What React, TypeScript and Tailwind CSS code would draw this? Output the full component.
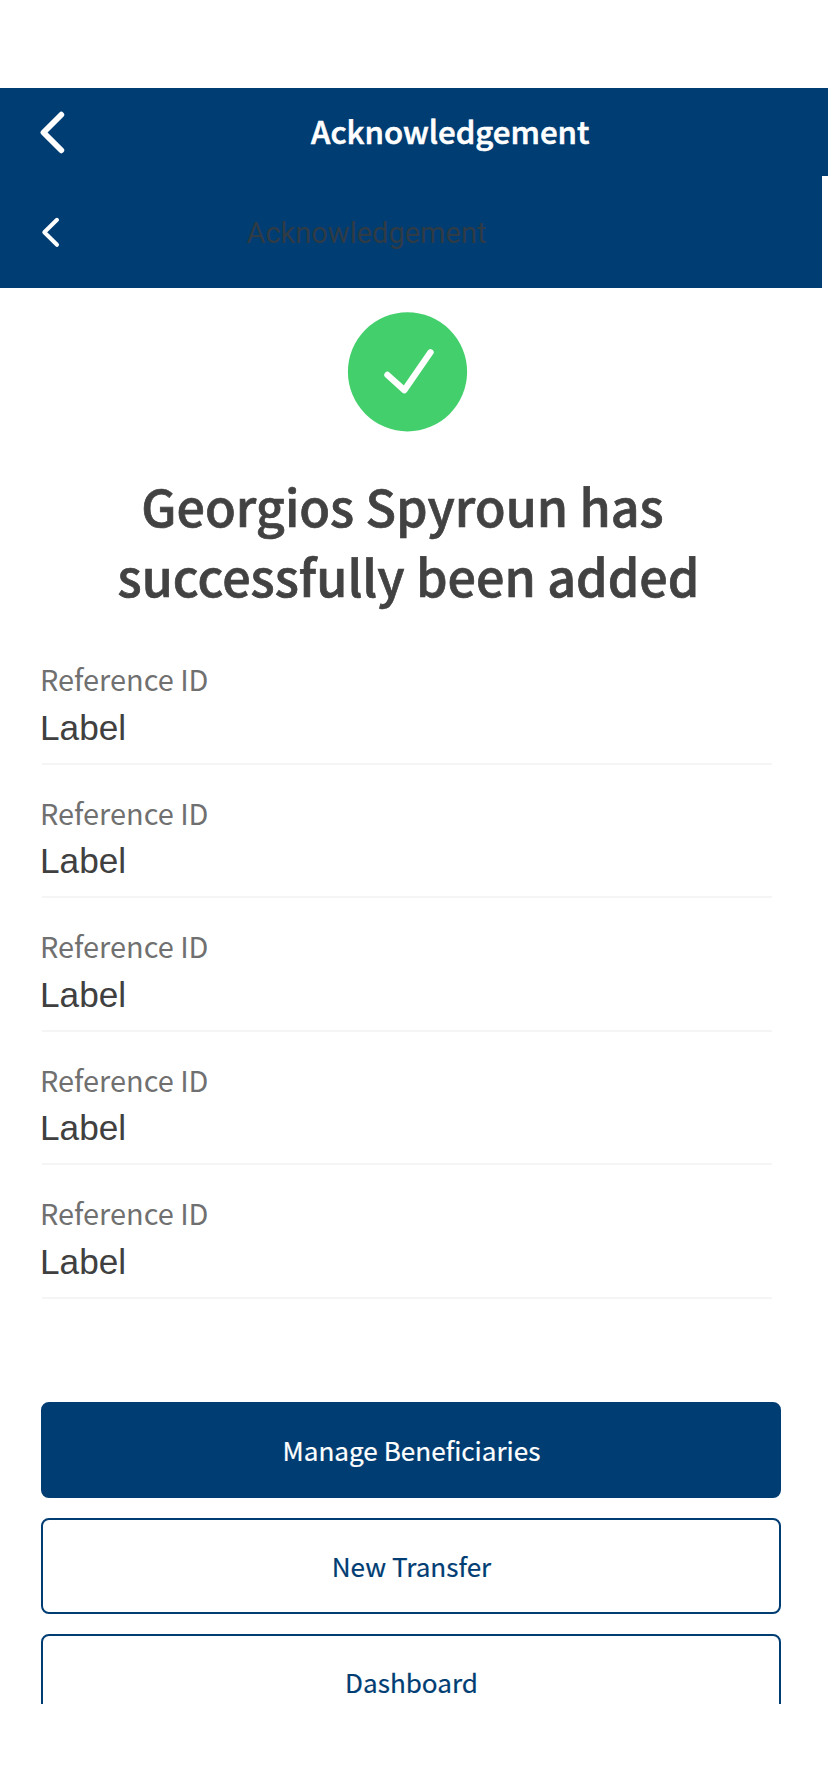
const SANS = "font-['Noto_Sans_CJK_SC','Noto_Sans',sans-serif]";

function Chevron({ className, points, stroke }: { className: string; points: string; stroke: number }) {
  return (
    <svg className={className} fill="none" stroke="#fff" strokeWidth={stroke} strokeLinecap="round" strokeLinejoin="round">
      <polyline points={points} />
    </svg>
  );
}

function DetailRow({ label, value }: { label: string; value: string }) {
  return (
    <div className="h-[133.5px] border-b-2 border-[#f5f5f5] pt-[28.7px]">
      <div className="-ml-[2px] text-[28.9px] leading-9 text-[#707070]">{label}</div>
      <div className="-ml-[2px] mt-[9.5px] font-['Liberation_Sans',Arial,sans-serif] text-[35.2px] leading-[44px] text-[#404040]">
        {value}
      </div>
    </div>
  );
}

function ActionButton({ label, primary = false }: { label: string; primary?: boolean }) {
  return (
    <button
      className={`h-24 w-full shrink-0 rounded-lg border-2 border-[#003d73] pl-px text-[26.1px] leading-9 [-webkit-text-stroke:0.2px] ${
        primary ? "bg-[#003d73] text-white" : "bg-white text-[#003d73]"
      }`}
    >
      {label}
    </button>
  );
}

const rows = [1, 2, 3, 4, 5];

export default function App() {
  return (
    <div className={`flex h-[1792px] w-[828px] flex-col bg-white pt-[88px] ${SANS}`}>
      <header className="flex h-[88px] shrink-0 items-center bg-[#003d73] pl-9">
        <Chevron className="h-12 w-8" points="25.3,6.7 7.5,24.5 25.3,42.3" stroke={5.8} />
        <h1 className="mb-[2px] ml-[243px] text-[31.2px] font-medium leading-[44px] text-white [-webkit-text-stroke:0.6px]">
          Acknowledgement
        </h1>
      </header>
      <div className="flex h-28 w-[822px] shrink-0 items-center bg-[#003d73] pl-9">
        <Chevron className="h-12 w-8" points="21,11.8 8.3,24.3 21,36.8" stroke={4} />
        <div className="ml-[178.5px] mt-[2px] font-[Roboto,sans-serif] text-[29px] leading-10 text-[#2f3b45]">
          Acknowledgement
        </div>
      </div>

      <main className="flex flex-col">
        <svg className="ml-[347px] mt-6 h-[120px] w-[121px]" viewBox="0 0 121 120" fill="none">
          <circle cx="60.5" cy="59.8" r="59.6" fill="#43cf6c" />
          <polyline points="40.5,63 57.3,78.2 83.5,40.3" stroke="#fff" strokeWidth="6.4" strokeLinecap="round" strokeLinejoin="round" />
        </svg>
        <h2 className="mt-[38px] w-[817px] text-center text-[50.25px] font-medium leading-[70px] text-[#424242] [-webkit-text-stroke:0.7px]">
          <span className="block pr-[12px]">Georgios Spyroun has</span>
          <span className="block">successfully been added</span>
        </h2>

        <section className="ml-[42px] mt-[21.4px] w-[730px]">
          {rows.map((n) => (
            <DetailRow key={n} label="Reference ID" value="Label" />
          ))}
        </section>

        <section className="ml-[41px] mt-[103.1px] flex h-[302px] w-[740px] flex-col gap-5 overflow-hidden">
          <ActionButton label="Manage Beneficiaries" primary />
          <ActionButton label="New Transfer" />
          <ActionButton label="Dashboard" />
        </section>
      </main>
    </div>
  );
}
